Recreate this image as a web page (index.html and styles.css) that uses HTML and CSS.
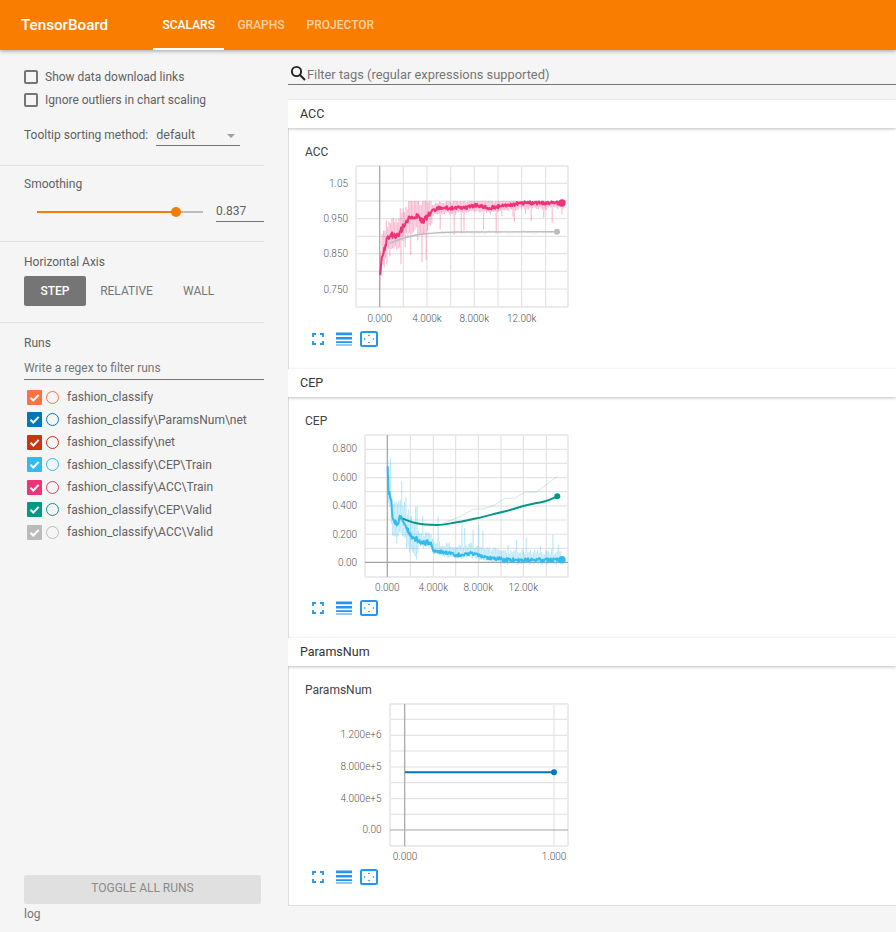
FILE: index.html
```html
<!DOCTYPE html>
<html lang="en">
<head>
<meta charset="utf-8">
<title>TensorBoard</title>
<link rel="stylesheet" href="styles.css">
</head>
<body>
<svg class="sprite" aria-hidden="true">
  <symbol id="i-full" viewBox="0 0 12 12"><path d="M1 4V1h3M8 1h3v3M11 8v3H8M4 11H1V8" fill="none" stroke="currentColor" stroke-width="1.8"/></symbol>
  <symbol id="i-list" viewBox="0 0 16 14"><path d="M0 .5h16v2.8H0zM0 5h16v2.6H0zM0 9.2h16v1.8H0zM0 12.4h16v1.2H0z" fill="currentColor"/></symbol>
  <symbol id="i-fit" viewBox="0 0 18 16"><rect x="1" y="1" width="16" height="14" rx="1.5" fill="none" stroke="currentColor" stroke-width="2"/><path d="M9 3.5l1.3 1.6H7.7zM9 12.5l1.3-1.6H7.7zM3.6 8l1.6-1.3v2.6zM14.4 8l-1.6-1.3v2.6z" fill="currentColor"/></symbol>
</svg>

<header class="topbar">
  <div class="brand">TensorBoard</div>
  <nav class="tabs">
    <a class="tab tab-active">SCALARS</a>
    <a class="tab">GRAPHS</a>
    <a class="tab">PROJECTOR</a>
  </nav>
</header>

<div class="layout">
  <aside class="sidebar">
    <section class="sec sec-options">
      <label class="check"><span class="box"></span>Show data download links</label>
      <label class="check"><span class="box"></span>Ignore outliers in chart scaling</label>
      <div class="sort-row">
        <span>Tooltip sorting method:</span>
        <div class="select"><span>default</span><i class="caret"></i></div>
      </div>
    </section>
    <section class="sec sec-smooth">
      <div class="sec-title">Smoothing</div>
      <div class="slider-row">
        <div class="slider"><div class="slider-fill"></div><div class="slider-knob"></div></div>
        <div class="num">0.837</div>
      </div>
    </section>
    <section class="sec sec-axis">
      <div class="sec-title">Horizontal Axis</div>
      <div class="axis-btns">
        <span class="axis-btn axis-on">STEP</span>
        <span class="axis-btn axis-rel">RELATIVE</span>
        <span class="axis-btn axis-wall">WALL</span>
      </div>
    </section>
    <section class="sec sec-runs">
      <div class="sec-title">Runs</div>
      <div class="regex">Write a regex to filter runs</div>
      <ul class="runs">
        <li class="run c1"><span class="cb"><svg viewBox="0 0 15 15"><path d="M3.5 7.8l2.8 2.7 5.4-5.6"/></svg></span><span class="dot"></span>fashion_classify</li>
        <li class="run c2"><span class="cb"><svg viewBox="0 0 15 15"><path d="M3.5 7.8l2.8 2.7 5.4-5.6"/></svg></span><span class="dot"></span>fashion_classify\ParamsNum\net</li>
        <li class="run c3"><span class="cb"><svg viewBox="0 0 15 15"><path d="M3.5 7.8l2.8 2.7 5.4-5.6"/></svg></span><span class="dot"></span>fashion_classify\net</li>
        <li class="run c4"><span class="cb"><svg viewBox="0 0 15 15"><path d="M3.5 7.8l2.8 2.7 5.4-5.6"/></svg></span><span class="dot"></span>fashion_classify\CEP\Train</li>
        <li class="run c5"><span class="cb"><svg viewBox="0 0 15 15"><path d="M3.5 7.8l2.8 2.7 5.4-5.6"/></svg></span><span class="dot"></span>fashion_classify\ACC\Train</li>
        <li class="run c6"><span class="cb"><svg viewBox="0 0 15 15"><path d="M3.5 7.8l2.8 2.7 5.4-5.6"/></svg></span><span class="dot"></span>fashion_classify\CEP\Valid</li>
        <li class="run c7"><span class="cb"><svg viewBox="0 0 15 15"><path d="M3.5 7.8l2.8 2.7 5.4-5.6"/></svg></span><span class="dot"></span>fashion_classify\ACC\Valid</li>
      </ul>
      <div class="toggle">TOGGLE ALL RUNS</div>
      <div class="logdir">log</div>
    </section>
  </aside>

  <main class="main">
    <div class="filter">
      <svg class="search" viewBox="0 0 16 16"><circle cx="6.5" cy="6.5" r="4.6"/><path d="M10 10l5 5"/></svg>
      <span>Filter tags (regular expressions supported)</span>
    </div>

    <div class="tag-head">ACC</div>
    <div class="card">
      <div class="chart-title">ACC</div>
      <svg class="chart" viewBox="300 160 280 165">
        <path class="grid" d="M403.3 166V307M427 166V307M450.7 166V307M474.3 166V307M498 166V307M521.7 166V307M545.7 166V307M356 183.3H568M356 201H568M356 218.7H568M356 236.3H568M356 253.7H568M356 271.3H568M356 289H568"/>
        <path class="frame" d="M356 166V307M568 166V307M356 166H568M356 307H568"/>
        <path class="axis" d="M379.7 166V307"/>
        <path id="acc-valid-raw" class="raw s-gray"/>
        <path id="acc-train-raw" class="raw s-pink"/>
        <path class="smooth thin s-gray" d="M390 243C400 239 412 235 423 234S445 232 457 232 510 232 557 231.7"/>
        <path id="acc-train" class="smooth s-pink"/>
        <circle class="pt f-gray" cx="557" cy="231.7" r="3"/>
        <circle class="pt f-pink" cx="562" cy="203" r="3.7"/>
        <text class="tick end" x="348" y="186.5">1.05</text>
        <text class="tick end" x="348" y="222">0.950</text>
        <text class="tick end" x="348" y="257">0.850</text>
        <text class="tick end" x="348" y="292.5">0.750</text>
        <text class="tick mid" x="379.7" y="322">0.000</text>
        <text class="tick mid" x="427" y="322">4.000k</text>
        <text class="tick mid" x="474.3" y="322">8.000k</text>
        <text class="tick mid" x="521.7" y="322">12.00k</text>
      </svg>
      <div class="tools">
        <svg class="ic ic-full"><use href="#i-full"/></svg>
        <svg class="ic ic-list"><use href="#i-list"/></svg>
        <svg class="ic ic-fit"><use href="#i-fit"/></svg>
      </div>
    </div>

    <div class="tag-head">CEP</div>
    <div class="card">
      <div class="chart-title">CEP</div>
      <svg class="chart" viewBox="300 429 280 165">
        <path class="grid" d="M410.3 435V577M433.3 435V577M455.7 435V577M478.3 435V577M501 435V577M523.3 435V577M546.3 435V577M365 449.3H568M365 463.3H568M365 477.7H568M365 491.7H568M365 506H568M365 520H568M365 534.3H568M365 548.3H568"/>
        <path class="frame" d="M365 435V577M568 435V577M365 435H568M365 577H568"/>
        <path class="axis" d="M387.3 435V577M365 562.3H568"/>
        <path class="raw s-green" d="M443 523.3L460 516.7 473.3 509.3 483.3 508.7 493.3 505.7 505 498.3 515 498.3 525 492 536.7 492 557.3 476.3"/>
        <path id="cep-train-raw" class="raw s-blue"/>
        <path class="smooth s-green" d="M400 517.3C406 520 411 522 416.7 523.3S430 525 436.7 525 449 523.5 456.7 522.3 470 519.5 476.7 518.3 495 513.5 503.3 511.7 516 508 523.3 506 535 503.5 543.3 501.7 552 498.5 557.3 496.3"/>
        <path id="cep-train" class="smooth s-blue"/>
        <circle class="pt f-green" cx="557.3" cy="496.3" r="3"/>
        <circle class="pt f-blue" cx="562" cy="559.7" r="3.7"/>
        <text class="tick end" x="357" y="451.5">0.800</text>
        <text class="tick end" x="357" y="480.5">0.600</text>
        <text class="tick end" x="357" y="509">0.400</text>
        <text class="tick end" x="357" y="537.5">0.200</text>
        <text class="tick end" x="357" y="565.5">0.00</text>
        <text class="tick mid" x="387.3" y="591">0.000</text>
        <text class="tick mid" x="433.3" y="591">4.000k</text>
        <text class="tick mid" x="478.3" y="591">8.000k</text>
        <text class="tick mid" x="523.3" y="591">12.00k</text>
      </svg>
      <div class="tools">
        <svg class="ic ic-full"><use href="#i-full"/></svg>
        <svg class="ic ic-list"><use href="#i-list"/></svg>
        <svg class="ic ic-fit"><use href="#i-fit"/></svg>
      </div>
    </div>

    <div class="tag-head">ParamsNum</div>
    <div class="card card-last">
      <div class="chart-title">ParamsNum</div>
      <svg class="chart" viewBox="300 698 280 165">
        <path class="grid" d="M554 704V846M390 719.3H568M390 735.3H568M390 751H568M390 767H568M390 782.7H568M390 798.7H568M390 814.3H568"/>
        <path class="frame" d="M390 704V846M568 704V846M390 704H568M390 846H568"/>
        <path class="axis" d="M404.7 704V846M390 830H568"/>
        <path class="smooth s-param" d="M405 772.3H554"/>
        <circle class="pt f-param" cx="554" cy="772.3" r="3"/>
        <text class="tick end" x="381.5" y="737.5">1.200e+6</text>
        <text class="tick end" x="381.5" y="769.5">8.000e+5</text>
        <text class="tick end" x="381.5" y="801.5">4.000e+5</text>
        <text class="tick end" x="381.5" y="832.5">0.00</text>
        <text class="tick mid" x="405" y="860">0.000</text>
        <text class="tick mid" x="554" y="860">1.000</text>
      </svg>
      <div class="tools">
        <svg class="ic ic-full"><use href="#i-full"/></svg>
        <svg class="ic ic-list"><use href="#i-list"/></svg>
        <svg class="ic ic-fit"><use href="#i-fit"/></svg>
      </div>
    </div>
  </main>
</div>
<script src="charts.js"></script>
</body>
</html>
```

FILE: styles.css
```css
* { box-sizing: border-box; }
html, body { margin: 0; height: 100%; overflow: hidden; }
body {
  background: #f5f5f5;
  color: #424242;
  font-family: Roboto, "Liberation Sans", sans-serif;
  font-size: 12px;
  display: flex;
  flex-direction: column;
}
.sprite { display: none; }

.topbar {
  height: 50px;
  flex: none;
  background: #f97e00;
  display: flex;
  align-items: center;
  padding-left: 21px;
  box-shadow: 0 1px 4px rgba(0,0,0,.35);
  position: relative;
  z-index: 2;
  color: #fff;
}
.brand { font-size: 15.2px; font-weight: 500; width: 132px; }
.tabs { display: flex; height: 50px; }
.tab {
  font-size: 12px;
  font-weight: 500;
  color: rgba(255,255,255,.65);
  display: flex;
  align-items: center;
  padding: 0 11px;
}
.tab-active {
  color: #fff;
  padding: 0 9.5px;
  border-bottom: 2px solid #fff;
  border-top: 2px solid transparent;
  margin-right: 2px;
}

.layout { flex: 1; display: flex; min-height: 0; }
.sidebar { width: 288px; flex: none; padding-right: 24px; display: flex; flex-direction: column; color: #616161; }
.sec { border-bottom: 1px solid #e0e0e0; padding-left: 24px; }
.sec-options { height: 116px; padding-top: 20px; }
.sec-smooth { height: 76px; padding-top: 11px; }
.sec-axis { height: 81px; padding-top: 13px; }
.sec-runs { flex: 1; border-bottom: 0; padding-top: 13px; display: flex; flex-direction: column; }
.sec-title { line-height: 15px; font-size: 12px; }

.check { display: flex; align-items: center; height: 14px; margin-bottom: 9px; font-size: 12px; }
.box { width: 14px; height: 14px; border: 2px solid #757575; border-radius: 2px; margin-right: 7px; }
.sort-row { display: flex; align-items: flex-end; margin-top: 19px; font-size: 12px; line-height: 15px; }
.sort-row > span { padding-bottom: 3px; }
.select {
  margin-left: 8px;
  width: 84px;
  height: 20px;
  border-bottom: 1px solid #757575;
  position: relative;
  line-height: 17px;
  font-size: 12.5px;
}
.caret {
  position: absolute;
  right: 5px;
  top: 8px;
  border: 4px solid transparent;
  border-top: 4px solid #9e9e9e;
}

.slider-row { display: flex; margin-top: 7px; height: 24px; }
.slider { margin: 12px 0 0 13px; width: 166px; height: 2px; background: #bdbdbd; position: relative; }
.slider-fill { height: 2px; width: 139px; background: #f57c00; }
.slider-knob {
  position: absolute;
  left: 134px;
  top: -4px;
  width: 10px;
  height: 10px;
  border-radius: 50%;
  background: #f57c00;
}
.num {
  margin-left: 13px;
  width: 48px;
  height: 23px;
  line-height: 24px;
  border-bottom: 1px solid #757575;
  font-size: 12px;
}

.axis-btns { display: flex; margin-top: 6px; }
.axis-btn { height: 30px; line-height: 30px; font-size: 12px; font-weight: 400; text-align: center; color: #757575; }
.axis-on { width: 62px; background: #757575; color: #fff; border-radius: 2px; font-weight: 500; }
.axis-rel { margin-left: 13px; width: 55px; }
.axis-wall { margin-left: 29px; width: 31px; }

.regex {
  margin-top: 9px;
  height: 20px;
  line-height: 17px;
  border-bottom: 1px solid #757575;
  color: #757575;
  font-size: 12px;
}
.runs { list-style: none; margin: 6px 0 0 3px; padding: 0; flex: 1; }
.run { display: flex; align-items: center; height: 22.5px; font-size: 12px; }
.cb { width: 15px; height: 15px; flex: none; background: var(--c); border-radius: 1px; }
.cb svg { display: block; width: 15px; height: 15px; }
.cb path { fill: none; stroke: #fff; stroke-width: 2; }
.dot { width: 13px; height: 13px; flex: none; border: 1.3px solid var(--c); border-radius: 50%; margin: 0 8px 0 4px; }
.c1 { --c: #ff7043; }
.c2 { --c: #0077bb; }
.c3 { --c: #cc3311; }
.c4 { --c: #33bbee; }
.c5 { --c: #ee3377; }
.c6 { --c: #009988; }
.c7 { --c: #bbbbbb; }

.toggle {
  height: 29px;
  line-height: 26px;
  background: #e0e0e0;
  border-radius: 2px;
  text-align: center;
  color: #8a8a8a;
  margin-right: 3px;
}
.logdir { margin-top: 3px; height: 25px; line-height: 15px; font-size: 12px; color: #757575; }

.main { flex: 1; min-width: 0; overflow: hidden; }
.filter {
  height: 35px;
  border-bottom: 1px solid #757575;
  display: flex;
  align-items: flex-end;
  padding: 0 0 0 2px;
  font-size: 12.85px;
  line-height: 18px;
  color: #757575;
  margin-bottom: 15px;
}
.search { width: 16px; height: 16px; margin: 0 1px 3px 0; flex: none; }
.search circle, .search path { fill: none; stroke: #212121; stroke-width: 1.9; }

.tag-head {
  height: 28px;
  line-height: 28px;
  padding-left: 12px;
  background: #fff;
  color: #333;
  font-size: 12.5px;
  box-shadow: 0 1px 3px rgba(0,0,0,.25);
  position: relative;
  z-index: 1;
}
.card {
  height: 241px;
  background: #fff;
  border-left: 1px solid #ddd;
  padding: 16px 0 0 11px;
}
.card-last { height: 240px; border-bottom: 1px solid #ddd; }
.chart-title { height: 14px; line-height: 16px; margin: 0 0 2px 5px; color: #424242; font-size: 12px; }
.chart { display: block; width: 280px; height: 165px; }

.grid { fill: none; stroke: #dedede; stroke-width: 1; }
.frame { fill: none; stroke: #ebebeb; stroke-width: 2; }
.axis { fill: none; stroke: #a3a3a3; stroke-width: 1.2; }
.raw { fill: none; stroke-width: 1; stroke-opacity: .2; }
.smooth { fill: none; stroke-width: 2; stroke-linejoin: round; }
.thin { stroke-width: 1.4; }
.s-pink { stroke: #ee3377; }
.s-gray { stroke: #bbbbbb; }
.s-blue { stroke: #33bbee; }
.s-green { stroke: #009988; }
.s-param { stroke: #0077bb; }
.f-pink { fill: #ee3377; }
.f-gray { fill: #bbbbbb; }
.f-blue { fill: #33bbee; }
.f-green { fill: #009988; }
.f-param { fill: #0077bb; }
.tick { font-family: Roboto, "Liberation Sans", sans-serif; font-size: 10px; font-weight: 300; fill: #555; }
.end { text-anchor: end; }
.mid { text-anchor: middle; }

.tools { display: flex; align-items: center; height: 18px; margin: 5px 0 0 12px; color: #2196f3; }
.ic { display: block; flex: none; }
.ic-full { width: 12px; height: 12px; margin-right: 12px; }
.ic-list { width: 16px; height: 14px; margin-right: 8px; }
.ic-fit { width: 18px; height: 16px; }
```

FILE: charts.js
```js
// Sample the noisy training curves for the scalar charts (seeded, so every load is identical).
let seed = 20190;
function rnd() {
  seed = (seed * 16807) % 2147483647;
  return seed / 2147483647;
}
function base(pts, x) {
  for (let i = 1; i < pts.length; i++) {
    if (x <= pts[i][0]) {
      const a = pts[i - 1], b = pts[i];
      return a[1] + (b[1] - a[1]) * (x - a[0]) / (b[0] - a[0]);
    }
  }
  return pts[pts.length - 1][1];
}
function toPath(rows) {
  return 'M' + rows.map(r => r[0].toFixed(1) + ' ' + r[1].toFixed(1)).join('L');
}
function sample(pts, step, noise, yMin, yMax) {
  const rows = [];
  const end = pts[pts.length - 1][0];
  for (let x = pts[0][0]; x <= end; x += step) {
    const y = base(pts, x) + noise(x);
    rows.push([x, Math.min(yMax, Math.max(yMin, y))]);
  }
  return rows;
}
function setPath(id, rows) {
  document.getElementById(id).setAttribute('d', toPath(rows));
}
const jitter = amp => (rnd() - 0.5) * 2 * amp;
// Raw series swing to both sides of the smoothed curve on alternate samples, giving a solid pale band.
let side = 1;
function swing(up, down) {
  side = -side;
  return side > 0 ? -up * (0.5 + rnd() / 2) : down * (0.5 + rnd() / 2);
}

const accTrain = [[380,277],[381,263],[383,253],[387,240],[392,235],[397,237],[403,227],[410,218],[417,215],[423,221],[430,213],[437,208],[450,208],[463,208],[477,205],[490,208],[507,205],[523,203],[543,203],[564,203]];
setPath('acc-train', sample(accTrain, 0.6, x => jitter(x < 430 ? 3 : 1.8), 166, 300));
setPath('acc-train-raw', sample(accTrain, 0.7, x => {
  if (x < 432) return swing(24, rnd() < 0.15 ? 44 : 20);
  const spike = rnd() < 0.12;
  return swing(9, spike ? (x < 500 ? 34 : 20) : 7);
}, 201, 290));
setPath('acc-valid-raw', sample([[390,244],[423,233],[557,232]], 2, () => jitter(2), 201, 290));

const cepTrain = [[387.7,467],[388.3,490],[390.7,497],[392.7,517],[396.7,525],[400,517],[405,525],[411.7,537],[423.3,543],[430,542],[433.3,550],[456.7,555],[471.7,553],[483.3,557],[506.7,560],[556.7,560],[561.7,559.5]];
setPath('cep-train', sample(cepTrain, 0.6, x => jitter(x < 430 ? 2.6 : 1.8), 440, 566));
setPath('cep-train-raw', sample(cepTrain, 0.7, x => {
  if (x < 418) return swing(rnd() < 0.2 ? 40 : 24, 22);
  const spike = rnd() < 0.12;
  return swing(spike ? (x < 490 ? 36 : 26) : 11, 5);
}, 440, 566));
```
